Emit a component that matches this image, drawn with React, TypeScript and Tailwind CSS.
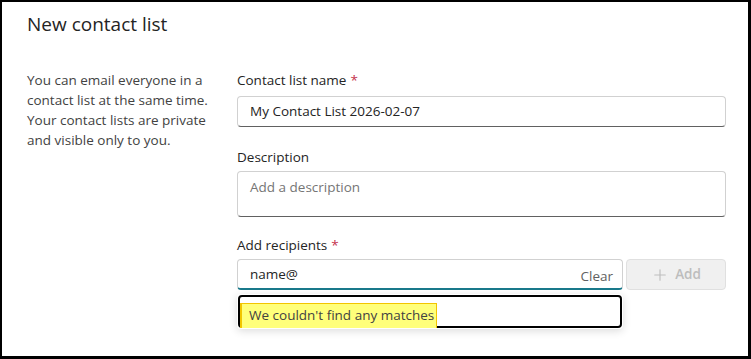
import React from 'react';
import { Plus } from 'lucide-react';

const font = { fontFamily: '"Open Sans", "Noto Sans", sans-serif' };

const Label: React.FC<{ text: string; required?: boolean }> = ({ text, required }) => (
  <div className="h-[20px] text-[13.5px] leading-[20px] text-[#242424]">
    {text}
    {required && <span className="ml-1 text-[#c4314b]">*</span>}
  </div>
);

export default function App() {
  const [recipient, setRecipient] = React.useState('name@');

  return (
    <div
      className="w-[751px] h-[359px] bg-white border-l-2 border-t-2 border-r-[3px] border-b-[3px] border-black overflow-hidden"
      style={font}
    >
      <h1 className="pl-[25px] pt-[9px] h-[60px] text-[19px] leading-[26px] text-[#242424]">New contact list</h1>

      <div className="flex pl-[25px] pr-[22px]">
        {/* Intro */}
        <div className="w-[210px] shrink-0 pt-[8px]">
          <p className="w-[182px] text-[13.5px] leading-[20px] text-[#424242]">
            You can email everyone in a contact list at the same time. Your contact lists are private and visible only to you.
          </p>
        </div>

        {/* Form */}
        <div className="flex-1 pt-[8px]">
          <Label text="Contact list name" required />
          <div className="mt-[6px] h-[31px] rounded-[4px] border border-[#d1d1d1] border-b-[#616161] flex items-center px-[12px] text-[13.5px] text-[#242424]">
            My Contact List 2026-02-07
          </div>

          <div className="mt-[20px]">
            <Label text="Description" />
          </div>
          <div className="mt-[4px] h-[46px] rounded-[4px] border border-[#d1d1d1] border-b-[#616161] px-[12px] pt-[5px] text-[13.5px] leading-[20px] text-[#757575]">
            Add a description
          </div>

          <div className="mt-[18px]">
            <Label text="Add recipients" required />
          </div>
          <div className="mt-[4px] flex gap-[3px]">
            <div className="relative w-[386px]">
              <div className="h-[31px] rounded-[4px] border border-[#d1d1d1] border-b-2 border-b-[#1a7a8c] flex items-center pl-[12px] pr-[9px]">
                <input
                  value={recipient}
                  onChange={(e) => setRecipient(e.target.value)}
                  className="flex-1 min-w-0 outline-none bg-transparent text-[13.5px] text-[#242424]"
                />
                <span className="mt-[5px] text-[13.5px] text-[#616161]">Clear</span>
              </div>

              {/* Suggestions popup */}
              <div className="absolute left-0 right-0 top-[35px] h-[35px] bg-white rounded-[4px] shadow-[0_2px_8px_rgba(0,0,0,0.14)] p-[1px]">
                <div className="h-full rounded-[4px] border-2 border-black pt-[6px]">
                  <div className="w-[197px] h-[25px] bg-[#ffff7a] border-l-2 border-t border-r border-[#f2c500] pl-[7px] text-[13.5px] leading-[22px] text-[#424242]">
                    We couldn't find any matches
                  </div>
                </div>
              </div>
            </div>

            <button
              disabled
              className="flex-1 h-[31px] rounded-[4px] border border-[#e0e0e0] bg-[#f0f0f0] flex items-center justify-center gap-[6px] text-[13.5px] font-semibold text-[#bdbdbd]"
            >
              <Plus className="w-[18px] h-[18px]" strokeWidth={1.5} />
              Add
            </button>
          </div>
        </div>
      </div>
    </div>
  );
}
